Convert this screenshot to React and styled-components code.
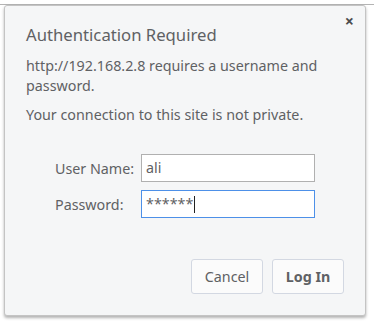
import React from "react";
import styled, { createGlobalStyle } from "styled-components";

const GlobalStyle = createGlobalStyle`
  html, body {
    margin: 0;
    padding: 0;
    background: #fff;
  }
  body {
    font-family: "Noto Sans", "Open Sans", sans-serif;
  }
`;

const Page = styled.div`
  width: 374px;
  height: 324px;
  padding-top: 3px;
  box-sizing: border-box;
  border-top: 1px solid transparent;
  position: relative;
  overflow: hidden;
  &:before {
    content: "";
    position: absolute;
    left: 0;
    right: 0;
    top: 3px;
    height: 1px;
    background: #b4b4b4;
  }
`;

const Dialog = styled.div`
  position: relative;
  margin: 1px 0 0 4px;
  width: 362px;
  height: 311px;
  box-sizing: border-box;
  background: #f5f6f7;
  border: 1px solid #c4c4c4;
  border-radius: 3px;
  box-shadow: 0 2px 3px rgba(0, 0, 0, 0.3);
  padding: 17px 21px 0 21px;
  display: flex;
  flex-direction: column;
  color: #5f6164;
`;

const Close = styled.div`
  position: absolute;
  top: 7px;
  right: 11px;
  font-size: 16px;
  font-weight: bold;
  color: #4b4c4e;
  line-height: 16px;
`;

const Title = styled.h1`
  margin: 0;
  font-size: 16.7px;
  font-weight: normal;
  line-height: 24px;
  color: #5f6164;
`;

const Text = styled.p`
  margin: ${(p) => p.$top || 0}px 0 0;
  font-size: 14.3px;
  line-height: 20px;
`;

const Form = styled.div`
  display: grid;
  grid-template-columns: 78px 174px;
  row-gap: 8px;
  column-gap: 8px;
  margin: 29px 0 0 29px;
  align-items: center;
`;

const Label = styled.label`
  font-size: 14.3px;
  white-space: nowrap;
`;

const Input = styled.div`
  height: 28px;
  box-sizing: border-box;
  background: #fff;
  border: 1px solid ${(p) => (p.$focused ? "#4d90e8" : "#b0b0b0")};
  font-size: 14.3px;
  line-height: 26px;
  padding-left: 4px;
  color: #5f6164;
  display: flex;
  align-items: center;
`;

const Caret = styled.span`
  display: inline-block;
  width: 1px;
  height: 17px;
  background: #222;
  margin-left: 1px;
`;

const Buttons = styled.div`
  margin-top: auto;
  margin-bottom: 21px;
  display: flex;
  justify-content: flex-end;
  gap: 9px;
`;

const Button = styled.button`
  width: 72px;
  height: 35px;
  background: #fbfbfb;
  border: 1px solid #d3d8e2;
  border-radius: 3px;
  font-family: "Noto Sans", sans-serif;
  font-size: 14.3px;
  font-weight: ${(p) => (p.$primary ? "bold" : "normal")};
  color: #5f6164;
  padding: 0;
`;

export default function App() {
  return (
    <Page>
      <GlobalStyle />
      <Dialog>
        <Close>×</Close>
        <Title>Authentication Required</Title>
        <Text $top={9}>http://192.168.2.8 requires a username and password.</Text>
        <Text $top={9}>Your connection to this site is not private.</Text>
        <Form>
          <Label>User Name:</Label>
          <Input>ali</Input>
          <Label>Password:</Label>
          <Input $focused>
            ******
            <Caret />
          </Input>
        </Form>
        <Buttons>
          <Button>Cancel</Button>
          <Button $primary>Log In</Button>
        </Buttons>
      </Dialog>
    </Page>
  );
}
